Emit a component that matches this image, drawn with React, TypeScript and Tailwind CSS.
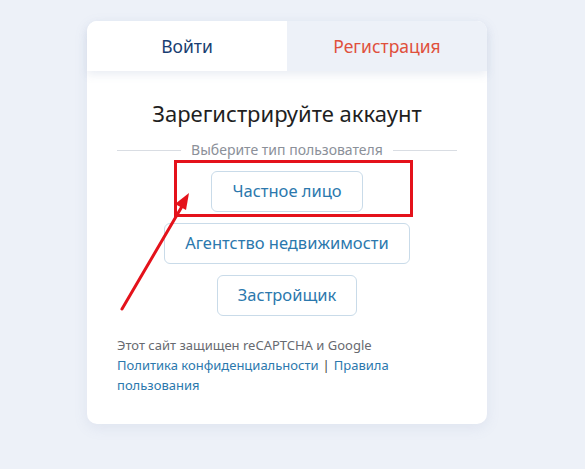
export default function App() {
  const types = ['Частное лицо', 'Агентство недвижимости', 'Застройщик'];

  return (
    <div className="min-h-[469px] w-full bg-[#edf1f8] pt-[21px] font-['Noto_Sans',sans-serif]">
      <div className="relative ml-[87px] w-[400px] rounded-[10px] bg-white shadow-[0_4px_14px_rgba(120,140,180,0.12)]">
        {/* ── Tabs ─────────────────────────────────────────────────────── */}
        <div className="flex h-[50px] overflow-hidden rounded-t-[10px] shadow-[0_4px_8px_rgba(120,140,180,0.15)]">
          <button className="flex-1 bg-white text-[17.5px] text-[#183e72]">Войти</button>
          <button className="flex-1 bg-[#edf1f8] text-[17.5px] text-[#e0503c]">Регистрация</button>
        </div>

        <div className="flex flex-col items-center px-[30px] pb-[29px] pt-[27px]">
          <h1 className="text-[22px] leading-[30px] text-[#1f1f1f]">Зарегистрируйте аккаунт</h1>

          <div className="mt-[13px] flex w-full items-center gap-[10px]">
            <div className="h-px flex-1 bg-[#d9dde3]" />
            <span className="text-[14px] leading-[18px] text-[#8b9099]">Выберите тип пользователя</span>
            <div className="h-px flex-1 bg-[#d9dde3]" />
          </div>

          <div className="mt-[12px] flex flex-col items-center gap-[11px]">
            {types.map((t) => (
              <button
                key={t}
                className="h-[41px] rounded-[6px] border border-[#c9dbe9] px-[20px] text-[16.5px] text-[#2b78ad]"
              >
                {t}
              </button>
            ))}
          </div>

          <div className="mt-[19px] w-full text-[13px] leading-[20px]">
            <p className="text-[#676a70]">Этот сайт защищен reCAPTCHA и Google</p>
            <p className="flex w-[285px] flex-wrap gap-x-[4px] text-[#2b78ad]">
              <a>Политика конфиденциальности</a>
              <span className="text-[#444]">|</span>
              <a>Правила</a>
              <a>пользования</a>
            </p>
          </div>
        </div>

        {/* ── Annotation overlay ──────────────────────────────────────── */}
        <div className="pointer-events-none absolute left-[87px] top-[139px] h-[57px] w-[239px] border-[3px] border-[#e4121b]" />
        <svg className="pointer-events-none absolute left-0 top-0" width="400" height="400">
          <line x1="35" y1="288" x2="97" y2="182" stroke="#e4121b" strokeWidth="3" strokeLinecap="round" />
          <polygon points="102,172 88,183 99,189" fill="#e4121b" />
        </svg>
      </div>
    </div>
  );
}
